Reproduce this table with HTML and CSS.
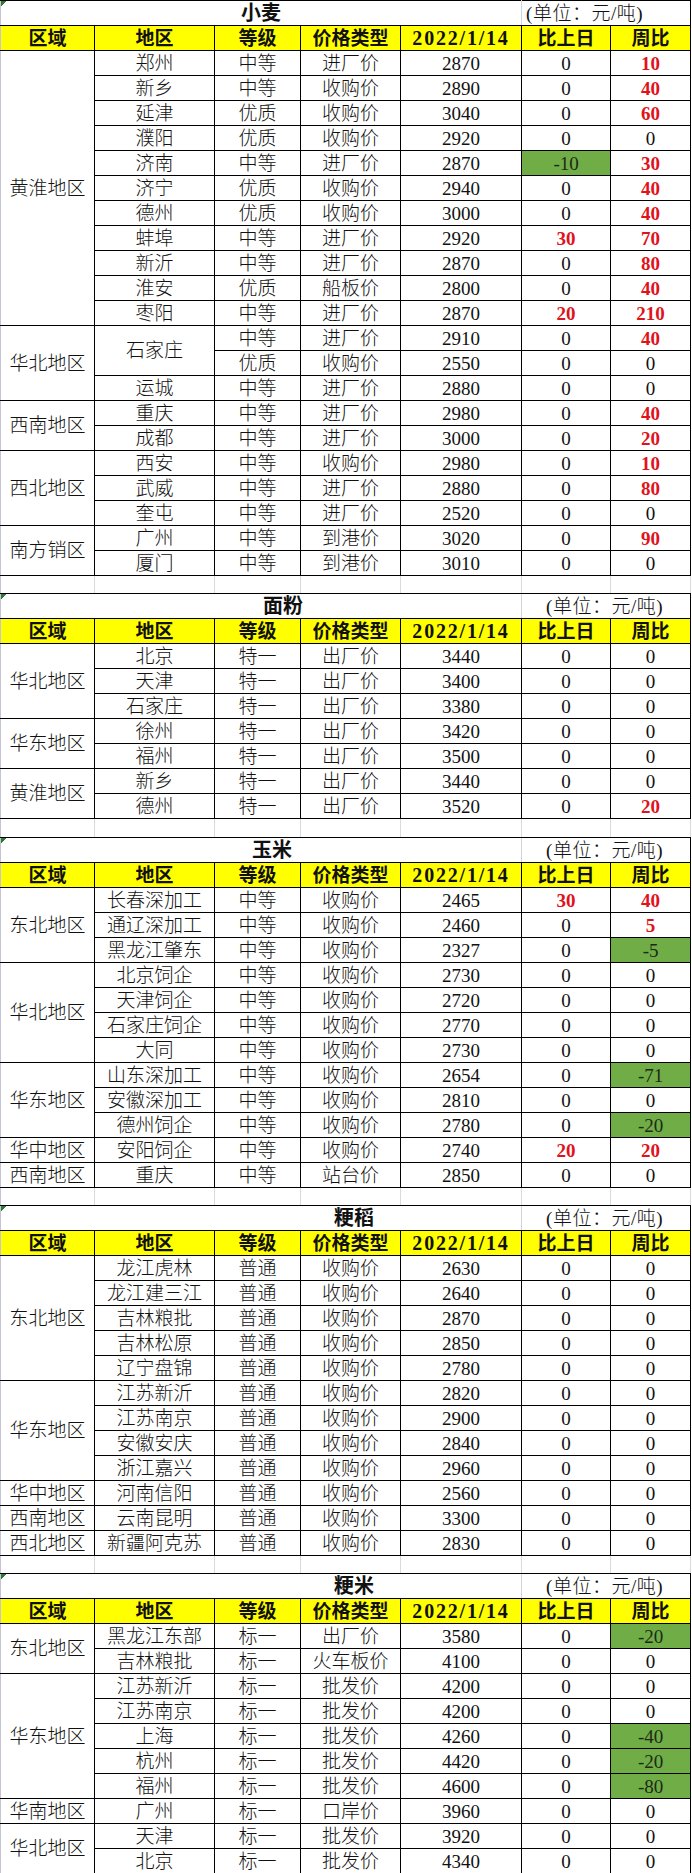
FILE: index.html
```html
<!DOCTYPE html>
<html lang="zh-CN">
<head>
<meta charset="utf-8">
<title>粮食价格</title>
<link rel="stylesheet" href="styles.css">
</head>
<body>
<table class="t">
<colgroup>
<col class="c1"><col class="c2"><col class="c3"><col class="c4"><col class="c5"><col class="c6"><col class="c7">
</colgroup>
<tbody>
<!-- 小麦 -->
<tr class="ttl"><td colspan="5" class="tname s1">小麦</td><td colspan="2" class="unit u1">(单位：元/吨)</td></tr>
<tr class="hd"><td>区域</td><td>地区</td><td>等级</td><td>价格类型</td><td class="date">2022/1/14</td><td>比上日</td><td>周比</td></tr>
<tr><td rowspan="11" class="reg">黄淮地区</td><td>郑州</td><td>中等</td><td>进厂价</td><td>2870</td><td>0</td><td class="r">10</td></tr>
<tr><td>新乡</td><td>中等</td><td>收购价</td><td>2890</td><td>0</td><td class="r">40</td></tr>
<tr><td>延津</td><td>优质</td><td>收购价</td><td>3040</td><td>0</td><td class="r">60</td></tr>
<tr><td>濮阳</td><td>优质</td><td>收购价</td><td>2920</td><td>0</td><td>0</td></tr>
<tr><td>济南</td><td>中等</td><td>进厂价</td><td>2870</td><td class="g">-10</td><td class="r">30</td></tr>
<tr><td>济宁</td><td>优质</td><td>收购价</td><td>2940</td><td>0</td><td class="r">40</td></tr>
<tr><td>德州</td><td>优质</td><td>收购价</td><td>3000</td><td>0</td><td class="r">40</td></tr>
<tr><td>蚌埠</td><td>中等</td><td>进厂价</td><td>2920</td><td class="r">30</td><td class="r">70</td></tr>
<tr><td>新沂</td><td>中等</td><td>进厂价</td><td>2870</td><td>0</td><td class="r">80</td></tr>
<tr><td>淮安</td><td>优质</td><td>船板价</td><td>2800</td><td>0</td><td class="r">40</td></tr>
<tr><td>枣阳</td><td>中等</td><td>进厂价</td><td>2870</td><td class="r">20</td><td class="r">210</td></tr>
<tr><td rowspan="3" class="reg">华北地区</td><td rowspan="2">石家庄</td><td>中等</td><td>进厂价</td><td>2910</td><td>0</td><td class="r">40</td></tr>
<tr><td>优质</td><td>收购价</td><td>2550</td><td>0</td><td>0</td></tr>
<tr><td>运城</td><td>中等</td><td>进厂价</td><td>2880</td><td>0</td><td>0</td></tr>
<tr><td rowspan="2" class="reg">西南地区</td><td>重庆</td><td>中等</td><td>进厂价</td><td>2980</td><td>0</td><td class="r">40</td></tr>
<tr><td>成都</td><td>中等</td><td>进厂价</td><td>3000</td><td>0</td><td class="r">20</td></tr>
<tr><td rowspan="3" class="reg">西北地区</td><td>西安</td><td>中等</td><td>收购价</td><td>2980</td><td>0</td><td class="r">10</td></tr>
<tr><td>武威</td><td>中等</td><td>进厂价</td><td>2880</td><td>0</td><td class="r">80</td></tr>
<tr><td>奎屯</td><td>中等</td><td>进厂价</td><td>2520</td><td>0</td><td>0</td></tr>
<tr><td rowspan="2" class="reg">南方销区</td><td>广州</td><td>中等</td><td>到港价</td><td>3020</td><td>0</td><td class="r">90</td></tr>
<tr><td>厦门</td><td>中等</td><td>到港价</td><td>3010</td><td>0</td><td>0</td></tr>
<tr class="gap"><td></td><td></td><td></td><td></td><td></td><td></td><td></td></tr>

<!-- 面粉 -->
<tr class="ttl"><td colspan="5" class="tname s2">面粉</td><td colspan="2" class="unit">(单位：元/吨)</td></tr>
<tr class="hd"><td>区域</td><td>地区</td><td>等级</td><td>价格类型</td><td class="date">2022/1/14</td><td>比上日</td><td>周比</td></tr>
<tr><td rowspan="3" class="reg">华北地区</td><td>北京</td><td>特一</td><td>出厂价</td><td>3440</td><td>0</td><td>0</td></tr>
<tr><td>天津</td><td>特一</td><td>出厂价</td><td>3400</td><td>0</td><td>0</td></tr>
<tr><td>石家庄</td><td>特一</td><td>出厂价</td><td>3380</td><td>0</td><td>0</td></tr>
<tr><td rowspan="2" class="reg">华东地区</td><td>徐州</td><td>特一</td><td>出厂价</td><td>3420</td><td>0</td><td>0</td></tr>
<tr><td>福州</td><td>特一</td><td>出厂价</td><td>3500</td><td>0</td><td>0</td></tr>
<tr><td rowspan="2" class="reg">黄淮地区</td><td>新乡</td><td>特一</td><td>出厂价</td><td>3440</td><td>0</td><td>0</td></tr>
<tr><td>德州</td><td>特一</td><td>出厂价</td><td>3520</td><td>0</td><td class="r">20</td></tr>
<tr class="gap gap19"><td></td><td></td><td></td><td></td><td></td><td></td><td></td></tr>

<!-- 玉米 -->
<tr class="ttl"><td colspan="5" class="tname s3">玉米</td><td colspan="2" class="unit">(单位：元/吨)</td></tr>
<tr class="hd"><td>区域</td><td>地区</td><td>等级</td><td>价格类型</td><td class="date">2022/1/14</td><td>比上日</td><td>周比</td></tr>
<tr><td rowspan="3" class="reg">东北地区</td><td>长春深加工</td><td>中等</td><td>收购价</td><td>2465</td><td class="r">30</td><td class="r">40</td></tr>
<tr><td>通辽深加工</td><td>中等</td><td>收购价</td><td>2460</td><td>0</td><td class="r">5</td></tr>
<tr><td>黑龙江肇东</td><td>中等</td><td>收购价</td><td>2327</td><td>0</td><td class="g">-5</td></tr>
<tr><td rowspan="4" class="reg">华北地区</td><td>北京饲企</td><td>中等</td><td>收购价</td><td>2730</td><td>0</td><td>0</td></tr>
<tr><td>天津饲企</td><td>中等</td><td>收购价</td><td>2720</td><td>0</td><td>0</td></tr>
<tr><td>石家庄饲企</td><td>中等</td><td>收购价</td><td>2770</td><td>0</td><td>0</td></tr>
<tr><td>大同</td><td>中等</td><td>收购价</td><td>2730</td><td>0</td><td>0</td></tr>
<tr><td rowspan="3" class="reg">华东地区</td><td>山东深加工</td><td>中等</td><td>收购价</td><td>2654</td><td>0</td><td class="g">-71</td></tr>
<tr><td>安徽深加工</td><td>中等</td><td>收购价</td><td>2810</td><td>0</td><td>0</td></tr>
<tr><td>德州饲企</td><td>中等</td><td>收购价</td><td>2780</td><td>0</td><td class="g">-20</td></tr>
<tr><td class="reg">华中地区</td><td>安阳饲企</td><td>中等</td><td>收购价</td><td>2740</td><td class="r">20</td><td class="r">20</td></tr>
<tr><td class="reg">西南地区</td><td>重庆</td><td>中等</td><td>站台价</td><td>2850</td><td>0</td><td>0</td></tr>
<tr class="gap"><td></td><td></td><td></td><td></td><td></td><td></td><td></td></tr>

<!-- 粳稻 -->
<tr class="ttl"><td colspan="5" class="tname s4">粳稻</td><td colspan="2" class="unit">(单位：元/吨)</td></tr>
<tr class="hd"><td>区域</td><td>地区</td><td>等级</td><td>价格类型</td><td class="date">2022/1/14</td><td>比上日</td><td>周比</td></tr>
<tr><td rowspan="5" class="reg">东北地区</td><td>龙江虎林</td><td>普通</td><td>收购价</td><td>2630</td><td>0</td><td>0</td></tr>
<tr><td>龙江建三江</td><td>普通</td><td>收购价</td><td>2640</td><td>0</td><td>0</td></tr>
<tr><td>吉林粮批</td><td>普通</td><td>收购价</td><td>2870</td><td>0</td><td>0</td></tr>
<tr><td>吉林松原</td><td>普通</td><td>收购价</td><td>2850</td><td>0</td><td>0</td></tr>
<tr><td>辽宁盘锦</td><td>普通</td><td>收购价</td><td>2780</td><td>0</td><td>0</td></tr>
<tr><td rowspan="4" class="reg">华东地区</td><td>江苏新沂</td><td>普通</td><td>收购价</td><td>2820</td><td>0</td><td>0</td></tr>
<tr><td>江苏南京</td><td>普通</td><td>收购价</td><td>2900</td><td>0</td><td>0</td></tr>
<tr><td>安徽安庆</td><td>普通</td><td>收购价</td><td>2840</td><td>0</td><td>0</td></tr>
<tr><td>浙江嘉兴</td><td>普通</td><td>收购价</td><td>2960</td><td>0</td><td>0</td></tr>
<tr><td class="reg">华中地区</td><td>河南信阳</td><td>普通</td><td>收购价</td><td>2560</td><td>0</td><td>0</td></tr>
<tr><td class="reg">西南地区</td><td>云南昆明</td><td>普通</td><td>收购价</td><td>3300</td><td>0</td><td>0</td></tr>
<tr><td class="reg">西北地区</td><td>新疆阿克苏</td><td>普通</td><td>收购价</td><td>2830</td><td>0</td><td>0</td></tr>
<tr class="gap"><td></td><td></td><td></td><td></td><td></td><td></td><td></td></tr>

<!-- 粳米 -->
<tr class="ttl"><td colspan="5" class="tname s4">粳米</td><td colspan="2" class="unit">(单位：元/吨)</td></tr>
<tr class="hd"><td>区域</td><td>地区</td><td>等级</td><td>价格类型</td><td class="date">2022/1/14</td><td>比上日</td><td>周比</td></tr>
<tr><td rowspan="2" class="reg">东北地区</td><td>黑龙江东部</td><td>标一</td><td>出厂价</td><td>3580</td><td>0</td><td class="g">-20</td></tr>
<tr><td>吉林粮批</td><td>标一</td><td>火车板价</td><td>4100</td><td>0</td><td>0</td></tr>
<tr><td rowspan="5" class="reg">华东地区</td><td>江苏新沂</td><td>标一</td><td>批发价</td><td>4200</td><td>0</td><td>0</td></tr>
<tr><td>江苏南京</td><td>标一</td><td>批发价</td><td>4200</td><td>0</td><td>0</td></tr>
<tr><td>上海</td><td>标一</td><td>批发价</td><td>4260</td><td>0</td><td class="g">-40</td></tr>
<tr><td>杭州</td><td>标一</td><td>批发价</td><td>4420</td><td>0</td><td class="g">-20</td></tr>
<tr><td>福州</td><td>标一</td><td>批发价</td><td>4600</td><td>0</td><td class="g">-80</td></tr>
<tr><td class="reg">华南地区</td><td>广州</td><td>标一</td><td>口岸价</td><td>3960</td><td>0</td><td>0</td></tr>
<tr><td rowspan="2" class="reg">华北地区</td><td>天津</td><td>标一</td><td>批发价</td><td>3920</td><td>0</td><td>0</td></tr>
<tr><td>北京</td><td>标一</td><td>批发价</td><td>4340</td><td>0</td><td>0</td></tr>
</tbody>
</table>
</body>
</html>
```
FILE: styles.css
```css
html, body {
  margin: 0;
  padding: 0;
  background: #ffffff;
}

.t {
  border-collapse: collapse;
  table-layout: fixed;
  width: 690px;
  font-family: "Liberation Serif", "Noto Sans CJK SC", serif;
  font-size: 19px;
  color: #111;
}

.c1 { width: 94px; }
.c2 { width: 120px; }
.c3 { width: 86px; }
.c4 { width: 100px; }
.c5 { width: 121px; }
.c6 { width: 89px; }
.c7 { width: 80px; }

.t tr { height: 25px; }

.t td {
  border: 1px solid #000;
  padding: 0;
  text-align: center;
  vertical-align: middle;
  line-height: 1;
  white-space: nowrap;
  overflow: hidden;
  font-weight: 300;
}

.t td:first-child {
  border-left-color: #c4c4d4;
}

.ttl td {
  font-weight: 700;
  font-size: 20px;
}

.tname {
  border-right-color: #d4d4d4 !important;
  background: linear-gradient(135deg, #2f7a32 0, #2f7a32 4px, transparent 4px) no-repeat left top / 7px 7px;
}

.s1 { text-align: center; }
.s2 { padding-left: 44px !important; }
.s3 { padding-left: 22px !important; }
.s4 { padding-left: 186px !important; }

.ttl .unit {
  font-weight: 300;
  font-size: 19px;
  text-align: left;
  padding-left: 24px;
  border-left-color: #d4d4d4;
  letter-spacing: 0.5px;
}

.ttl .u1 { padding-left: 4px; }

.hd td {
  background: #ffff00;
  font-weight: 700;
  font-size: 19px;
}

.hd .date {
  letter-spacing: 1.8px;
  font-size: 20px;
}

.reg {
  font-size: 19px;
}

.r {
  color: #e0121b;
  font-weight: 700 !important;
}

.g {
  background: #70ad47;
  color: #1c2a14;
}

.gap { height: 18px !important; }
.gap19 { height: 19px !important; }

.gap td {
  border-left: 1px solid #dadada;
  border-right: 1px solid #dadada;
  border-top: 1px solid #000;
  border-bottom: 1px solid #000;
}

.gap td:first-child {
  border-left-color: #c4c4d4;
}

.gap td:last-child {
  border-right-color: #dadada;
}
```
